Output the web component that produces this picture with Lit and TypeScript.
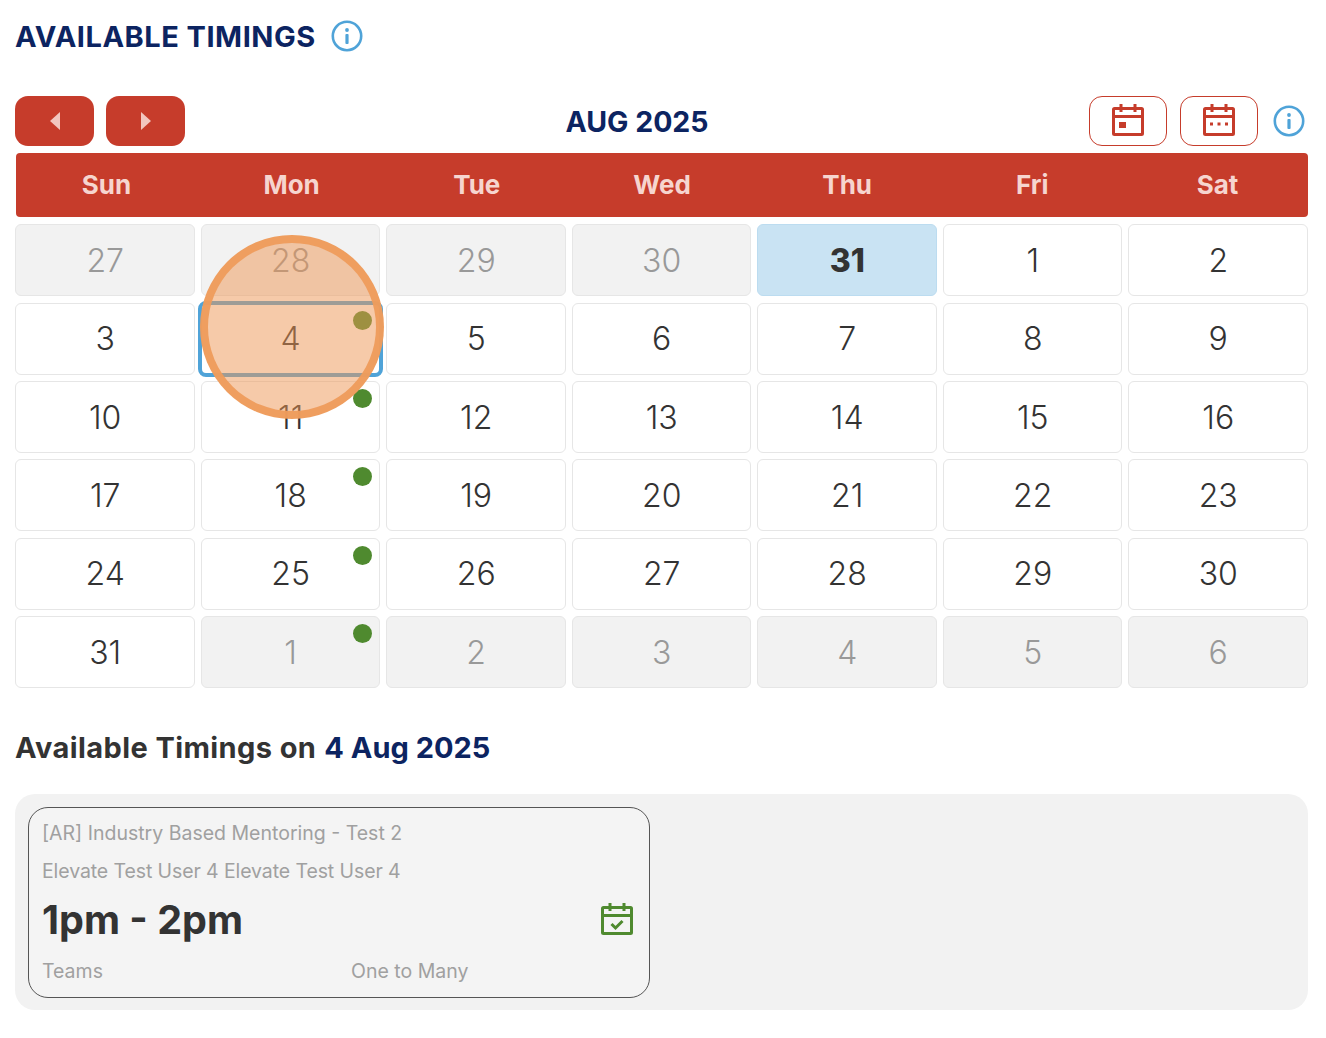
import {css, html, LitElement, nothing, svg} from 'lit';
import {customElement} from 'lit/decorators.js';

type Day = {n: number; muted?: boolean; today?: boolean; selected?: boolean; dot?: boolean};

const WEEKDAYS = ['Sun', 'Mon', 'Tue', 'Wed', 'Thu', 'Fri', 'Sat'];

const DAYS: Day[] = [
  ...[27, 28, 29, 30].map((n) => ({n, muted: true})),
  {n: 31, today: true},
  {n: 1},
  {n: 2},
  ...Array.from({length: 29}, (_, i) => ({
    n: i + 3,
    selected: i === 1,
    dot: [1, 8, 15, 22].includes(i),
  })),
  {n: 1, muted: true, dot: true},
  ...[2, 3, 4, 5, 6].map((n) => ({n, muted: true})),
];

const infoIcon = html`
  <svg class="info" viewBox="0 0 32 32" fill="none">
    <circle cx="16" cy="16" r="14.2" stroke="#4fa3d8" stroke-width="2.6" />
    <circle cx="16" cy="10" r="1.9" fill="#4fa3d8" />
    <rect x="14.4" y="14" width="3.2" height="10" rx="1" fill="#4fa3d8" />
  </svg>
`;

const calendarBase = svg`
  <rect x="1.5" y="4.5" width="29" height="26" rx="1" stroke-width="3" />
  <path d="M1.500 12.500h29M9 0v8M23 0v8" stroke-width="3" />
`;

@customElement('app-root')
export class AppRoot extends LitElement {
  override render() {
    return html`
      <div class="title-row">
        <h1>AVAILABLE TIMINGS</h1>
        ${infoIcon}
      </div>

      <div class="toolbar">
        <div class="nav">
          <button class="nav-btn" aria-label="Previous">
            <svg viewBox="0 0 10 18"><path d="M10 0v18L0 9z" /></svg>
          </button>
          <button class="nav-btn" aria-label="Next">
            <svg viewBox="0 0 10 18"><path d="M0 0v18l10-9z" /></svg>
          </button>
        </div>
        <div class="month">AUG 2025</div>
        <div class="views">
          <button class="view-btn" aria-label="Day view">
            <svg class="cal" viewBox="0 0 32 32" fill="none" stroke="#c63c2b">
              ${calendarBase}
              <rect x="7" y="18" width="7" height="6" fill="#c63c2b" stroke="none" />
            </svg>
          </button>
          <button class="view-btn" aria-label="Month view">
            <svg class="cal" viewBox="0 0 32 32" fill="none" stroke="#c63c2b">
              ${calendarBase}
              <path d="M7 20h3M14.500 20h3M22 20h3" stroke-width="3" />
            </svg>
          </button>
          ${infoIcon}
        </div>
      </div>

      <div class="weekdays">
        ${WEEKDAYS.map((d) => html`<div>${d}</div>`)}
      </div>

      <div class="calendar">
        <div class="grid">
          ${DAYS.map(
            (d) => html`
              <div
                class="day ${d.muted ? 'muted' : ''} ${d.today ? 'today' : ''} ${d.selected
                  ? 'selected'
                  : ''}"
              >
                ${d.n} ${d.dot ? html`<span class="dot"></span>` : nothing}
              </div>
            `,
          )}
        </div>
        <div class="highlight"></div>
      </div>

      <h2><em>Available Timings on</em> <span>4 Aug 2025</span></h2>

      <div class="panel">
        <div class="card">
          <div class="line">[AR] Industry Based Mentoring - Test 2</div>
          <div class="line tight">Elevate Test User 4 Elevate Test User 4</div>
          <div class="time-row">
            <div class="time">1pm - 2pm</div>
            <svg class="booked" viewBox="0 0 32 32" fill="none" stroke="#4f8a2f">
              ${calendarBase}
              <path d="M10.500 21l4 4 7-7" stroke-width="3" />
            </svg>
          </div>
          <div class="meta">
            <span>Teams</span>
            <span>One to Many</span>
          </div>
        </div>
      </div>
    `;
  }

  static override styles = css`
    :host {
      display: block;
      position: relative;
      height: 1038px;
      box-sizing: border-box;
      padding: 0 18px 0 15px;
      background: #fff;
      color: #333;
      font-family: Inter, 'Liberation Sans', sans-serif;
      overflow: hidden;
    }

    .title-row {
      display: flex;
      align-items: center;
      gap: 15px;
      height: 72px;
    }

    h1 {
      margin: 0;
      font-size: 29px;
      font-weight: 700;
      letter-spacing: 0.5px;
      color: #0c2461;
    }

    .info {
      width: 32px;
      height: 32px;
      flex: none;
    }

    .toolbar {
      display: flex;
      align-items: center;
      justify-content: space-between;
      height: 50px;
      margin-top: 24px;
    }

    .nav {
      display: flex;
      align-items: center;
      gap: 12px;
    }

    .views {
      display: flex;
      align-items: center;
      gap: 13px;
      margin-right: 3px;
    }

    .views .info {
      margin-left: 2px;
    }

    button {
      width: 79px;
      height: 50px;
      padding: 0;
      display: flex;
      align-items: center;
      justify-content: center;
      cursor: pointer;
    }

    .nav-btn {
      border: none;
      border-radius: 13px;
      background: #c63c2b;
    }

    .nav-btn svg {
      width: 10px;
      height: 18px;
      fill: #f2c6bf;
    }

    .view-btn {
      width: 78px;
      border: 1.500px solid #c63c2b;
      border-radius: 13px;
      background: #fff;
    }

    .cal {
      width: 32px;
      height: 32px;
      margin-top: -3px;
    }

    .month {
      font-size: 28.500px;
      font-weight: 700;
      color: #0c2461;
    }

    .weekdays {
      display: grid;
      grid-template-columns: repeat(7, 185.200px);
      justify-content: center;
      align-items: center;
      height: 64px;
      margin: 7px 0 7.300px 1px;
      padding-bottom: 2px;
      box-sizing: border-box;
      border-radius: 4px;
      background: #c63c2b;
      color: #f6d5cf;
      font-size: 26px;
      font-weight: 700;
      text-align: center;
    }

    .calendar {
      position: relative;
    }

    .grid {
      display: grid;
      grid-template-columns: repeat(7, 1fr);
      grid-auto-rows: 72px;
      gap: 6.400px 6px;
      margin-left: 0.400px;
    }

    .day {
      position: relative;
      display: flex;
      align-items: center;
      justify-content: center;
      box-sizing: border-box;
      border: 1.500px solid #e6e6e6;
      border-radius: 6px;
      background: #fff;
      font-size: 32px;
      font-weight: 300;
      color: #333;
    }

    .day.muted {
      background: #f2f2f2;
      color: #999;
    }

    .day.today {
      border-color: #bcdcf0;
      background: #c9e3f3;
      font-weight: 800;
    }

    .day.selected {
      margin: -2px -3px -2px -3px;
      border: 4px solid #4fa3d8;
      border-radius: 8px;
    }

    .dot {
      position: absolute;
      top: 7px;
      right: 7px;
      width: 19px;
      height: 19px;
      border-radius: 50%;
      background: #4f8a2f;
    }

    .day.selected .dot {
      top: 6px;
      right: 7px;
    }

    .highlight {
      position: absolute;
      left: 185px;
      top: 10.700px;
      width: 184px;
      height: 184px;
      box-sizing: border-box;
      border: 8px solid rgba(239, 156, 92, 0.95);
      border-radius: 50%;
      background: rgba(238, 150, 84, 0.5);
      pointer-events: none;
    }

    h2 {
      display: flex;
      align-items: center;
      gap: 8px;
      height: 40px;
      margin: 39px 0 26.700px;
      font-size: 29px;
      font-weight: 700;
      color: #333;
    }

    h2 em {
      font-style: normal;
      letter-spacing: 0.4px;
    }

    h2 span {
      color: #0c2461;
    }

    .panel {
      box-sizing: border-box;
      height: 216px;
      padding: 13px;
      border-radius: 20px;
      background: #f2f2f2;
    }

    .card {
      box-sizing: border-box;
      width: 622px;
      height: 191px;
      padding: 6px 14px 7px 13px;
      border: 1.500px solid #555;
      border-radius: 20px;
      background: #f4f4f4;
      color: #a0a0a0;
      font-size: 19.500px;
    }

    .line {
      height: 38px;
      line-height: 38px;
    }

    .line.tight {
      letter-spacing: -0.1px;
    }

    .time-row {
      display: flex;
      align-items: center;
      justify-content: space-between;
      height: 62px;
    }

    .time {
      font-size: 39.500px;
      font-weight: 700;
      color: #333;
      margin-top: -1px;
    }

    .booked {
      width: 32px;
      height: 32px;
      margin: -4px 2px 0 0;
    }

    .meta {
      display: grid;
      grid-template-columns: 309px 1fr;
      height: 38px;
      line-height: 38px;
    }
  `;
}
